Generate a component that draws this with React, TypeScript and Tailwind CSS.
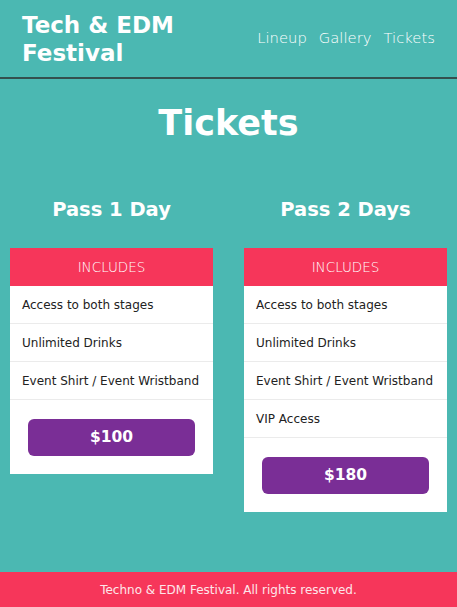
import React from "react";

const passes = [
  { name: "Pass 1 Day", items: ["Access to both stages", "Unlimited Drinks", "Event Shirt / Event Wristband"], price: "$100" },
  { name: "Pass 2 Days", items: ["Access to both stages", "Unlimited Drinks", "Event Shirt / Event Wristband", "VIP Access"], price: "$180" },
];

export default function App() {
  return (
    <div className="min-h-screen flex flex-col bg-[#4bb8b2] text-white" style={{ fontFamily: '"DejaVu Sans", sans-serif' }}>
      <header className="h-[79px] flex items-center justify-between px-[22px] border-b-2 border-[#34504e]">
        <h1 className="text-[23px] font-bold leading-[28px] pt-[1px]">Tech &amp; EDM<br />Festival</h1>
        <nav className="flex gap-[12px] text-[14.8px] font-light text-white">
          <a>Lineup</a>
          <a>Gallery</a>
          <a>Tickets</a>
        </nav>
      </header>
      <main className="flex-1">
        <h2 className="text-center text-[35px] font-bold leading-[44px] mt-[22px]">Tickets</h2>
        <div className="grid grid-cols-2 gap-[31px] px-[10px] mt-[51px] items-start">
          {passes.map((p) => (
            <div key={p.name}>
              <h3 className="text-center text-[19.5px] font-bold leading-[28px]">{p.name}</h3>
              <div className="mt-[24px] bg-white">
                <div className="h-[38px] bg-[#f6365a] flex items-center justify-center text-[13.5px] font-light text-white">INCLUDES</div>
                {p.items.map((it) => (
                  <div key={it} className="h-[38px] flex items-center pl-[12px] border-b border-[#ebebeb] text-[12px] text-[#222]">{it}</div>
                ))}
                <div className="px-[18px] pt-[19px] pb-[18px]">
                  <div className="h-[37px] rounded-[6px] bg-[#7a2e96] flex items-center justify-center text-[15.5px] font-bold text-white">{p.price}</div>
                </div>
              </div>
            </div>
          ))}
        </div>
      </main>
      <footer className="h-[35px] bg-[#f6365a] flex items-center justify-center text-[12px] text-[#fde6ea]">
        Techno &amp; EDM Festival. All rights reserved.
      </footer>
    </div>
  );
}
